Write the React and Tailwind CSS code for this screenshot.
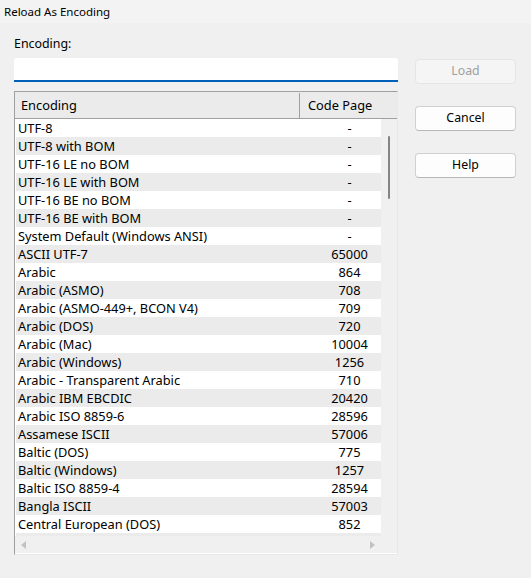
const rows = [
  ['UTF-8', '-'],
  ['UTF-8 with BOM', '-'],
  ['UTF-16 LE no BOM', '-'],
  ['UTF-16 LE with BOM', '-'],
  ['UTF-16 BE no BOM', '-'],
  ['UTF-16 BE with BOM', '-'],
  ['System Default (Windows ANSI)', '-'],
  ['ASCII UTF-7', '65000'],
  ['Arabic', '864'],
  ['Arabic (ASMO)', '708'],
  ['Arabic (ASMO-449+, BCON V4)', '709'],
  ['Arabic (DOS)', '720'],
  ['Arabic (Mac)', '10004'],
  ['Arabic (Windows)', '1256'],
  ['Arabic - Transparent Arabic', '710'],
  ['Arabic IBM EBCDIC', '20420'],
  ['Arabic ISO 8859-6', '28596'],
  ['Assamese ISCII', '57006'],
  ['Baltic (DOS)', '775'],
  ['Baltic (Windows)', '1257'],
  ['Baltic ISO 8859-4', '28594'],
  ['Bangla ISCII', '57003'],
  ['Central European (DOS)', '852'],
  ['Central European (ISO)', '28592'],
]

function DialogButton({ children, disabled }) {
  return (
    <button
      disabled={disabled}
      className={
        disabled
          ? 'h-[25px] w-[101px] rounded-[4px] border border-[#e5e5e5] bg-[#f5f5f5] text-[12.3px] text-[#a0a0a0]'
          : 'h-[25px] w-[101px] rounded-[4px] border border-[#d0d0d0] border-b-[#b8b8b8] bg-[#fdfdfd] text-[12.3px] text-black'
      }
    >
      {children}
    </button>
  )
}

export default function App() {
  return (
    <div className="w-[531px] h-[578px] bg-[#f0f0f0] text-black font-['Noto_Sans',_'Open_Sans',_sans-serif] overflow-hidden">
      {/* Title bar */}
      <div className="h-[23px] bg-[#f3f3f3] pl-[4px] flex items-center text-[11.5px]">Reload As Encoding</div>

      <div className="flex pl-[14px] pt-[12px] gap-[17px]">
        {/* Left column */}
        <div className="w-[384px] flex flex-col">
          <div className="h-[17px] leading-[17px] text-[12.4px] mb-[6px]">Encoding:</div>
          <div className="h-[24px] bg-white border-b-2 border-[#005fb8] rounded-t-[3px]" />

          {/* Encoding list */}
          <div className="mt-[9px] h-[464px] border border-t-[#a0a0a0] border-l-[#a0a0a0] border-r-[#e8e8e8] border-b-[#e8e8e8] bg-white flex flex-col text-[12.8px]">
            <div className="h-[27px] flex bg-[#ebebeb] border-b border-[#a0a0a0] shrink-0 pt-[1px]">
              <div className="w-[285px] border-r border-[#a0a0a0] pl-[6px] flex items-center">Encoding</div>
              <div className="flex-1 pl-[8px] flex items-center">Code Page</div>
            </div>
            <div className="flex h-[417px] shrink-0">
              <div className="w-[366px] pl-[1px] overflow-hidden">
                {rows.map(([name, page], i) => (
                  <div key={name} className={`h-[18px] leading-[18px] flex ${i % 2 ? 'bg-[#ebebeb]' : 'bg-white'}`}>
                    <div className="w-[284px] pl-[2px] whitespace-nowrap">{name}</div>
                    <div className="w-[81px] pl-[18px] text-center">{page}</div>
                  </div>
                ))}
              </div>
              <div className="w-[16px] bg-[#f0f0f0] pt-[17px] flex justify-center">
                <div className="w-[2px] h-[63px] bg-[#858585] rounded-full" />
              </div>
            </div>
            <div className="flex h-[17px] shrink-0">
              <div className="w-[366px] bg-[#f0f0f0] flex items-center justify-between pl-[6px] pr-[6px]">
                <svg width="5" height="8" viewBox="0 0 5 8"><path d="M5 0 L0 4 L5 8 Z" fill="#c2c2c2" /></svg>
                <svg width="5" height="8" viewBox="0 0 5 8"><path d="M0 0 L5 4 L0 8 Z" fill="#c2c2c2" /></svg>
              </div>
              <div className="w-[16px] bg-[#f0f0f0]" />
            </div>
          </div>
        </div>

        {/* Right column */}
        <div className="flex flex-col pt-[24px] gap-[22px]">
          <DialogButton disabled>Load</DialogButton>
          <DialogButton>Cancel</DialogButton>
          <DialogButton>Help</DialogButton>
        </div>
      </div>
    </div>
  )
}
